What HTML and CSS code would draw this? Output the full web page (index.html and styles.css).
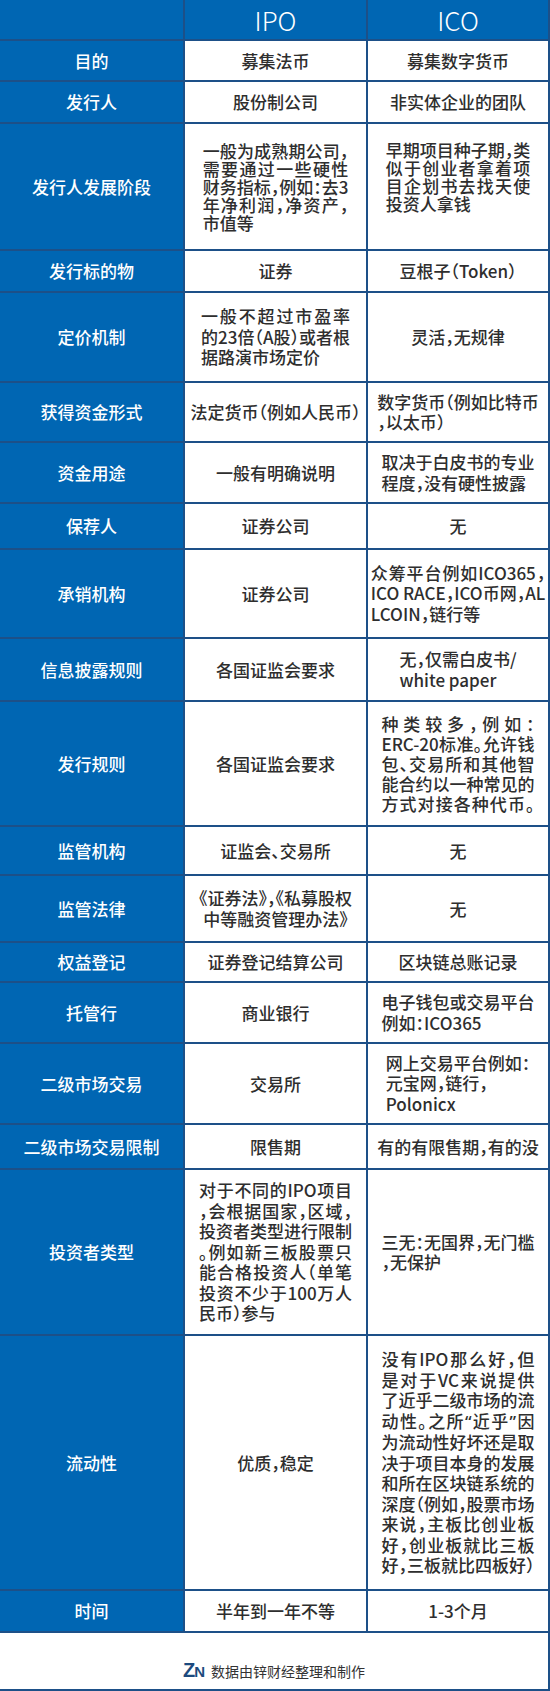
FILE: index.html
```html
<!DOCTYPE html>
<html lang="zh-CN">
<head>
<meta charset="utf-8">
<title>IPO vs ICO</title>
<link rel="stylesheet" href="styles.css">
</head>
<body>
<div class="table">
  <div class="c hd"></div>
  <div class="c hd">IPO</div>
  <div class="c hd">ICO</div>

  <div class="c lab">目的</div>
  <div class="c">募集法币</div>
  <div class="c">募集数字货币</div>

  <div class="c lab">发行人</div>
  <div class="c">股份制公司</div>
  <div class="c">非实体企业的团队</div>

  <div class="c lab">发行人发展阶段</div>
  <div class="c"><div class="tx lh18"><span class="l">一般为成熟期公司，</span><span class="l">需要通过一些硬性</span><span class="l">财务指标，例如：去3</span><span class="l">年净利润，净资产，</span><span class="l e">市值等</span></div></div>
  <div class="c top"><div class="tx lh18"><span class="l">早期项目种子期，类</span><span class="l">似于创业者拿着项</span><span class="l">目企划书去找天使</span><span class="l e">投资人拿钱</span></div></div>

  <div class="c lab">发行标的物</div>
  <div class="c">证券</div>
  <div class="c">豆根子（Token）</div>

  <div class="c lab">定价机制</div>
  <div class="c"><div class="tx"><span class="l">一般不超过市盈率</span><span class="l">的23倍（A股）或者根</span><span class="l e">据路演市场定价</span></div></div>
  <div class="c">灵活，无规律</div>

  <div class="c lab">获得资金形式</div>
  <div class="c">法定货币（例如人民币）</div>
  <div class="c"><div class="tx"><span class="l">数字货币（例如比特币</span><span class="l e">，以太币）</span></div></div>

  <div class="c lab">资金用途</div>
  <div class="c">一般有明确说明</div>
  <div class="c"><div class="tx"><span class="l">取决于白皮书的专业</span><span class="l e">程度，没有硬性披露</span></div></div>

  <div class="c lab">保荐人</div>
  <div class="c">证券公司</div>
  <div class="c">无</div>

  <div class="c lab">承销机构</div>
  <div class="c">证券公司</div>
  <div class="c"><div class="tx"><span class="l">众筹平台例如ICO365，</span><span class="l">ICO RACE，ICO币网，AL</span><span class="l e">LCOIN，链行等</span></div></div>

  <div class="c lab">信息披露规则</div>
  <div class="c">各国证监会要求</div>
  <div class="c"><div class="tx"><span class="l e">无，仅需白皮书/</span><span class="l e">white paper</span></div></div>

  <div class="c lab">发行规则</div>
  <div class="c">各国证监会要求</div>
  <div class="c"><div class="tx lh20"><span class="l">种类较多，例如：</span><span class="l">ERC-20标准。允许钱</span><span class="l">包、交易所和其他智</span><span class="l">能合约以一种常见的</span><span class="l">方式对接各种代币。</span></div></div>

  <div class="c lab">监管机构</div>
  <div class="c">证监会、交易所</div>
  <div class="c">无</div>

  <div class="c lab">监管法律</div>
  <div class="c"><div class="tx ctr"><span class="l">《证券法》，《私募股权</span><span class="l">中等融资管理办法》</span></div></div>
  <div class="c">无</div>

  <div class="c lab">权益登记</div>
  <div class="c">证券登记结算公司</div>
  <div class="c">区块链总账记录</div>

  <div class="c lab">托管行</div>
  <div class="c">商业银行</div>
  <div class="c"><div class="tx"><span class="l">电子钱包或交易平台</span><span class="l e">例如：ICO365</span></div></div>

  <div class="c lab">二级市场交易</div>
  <div class="c">交易所</div>
  <div class="c"><div class="tx"><span class="l">网上交易平台例如：</span><span class="l e">元宝网，链行，</span><span class="l e">Polonicx</span></div></div>

  <div class="c lab">二级市场交易限制</div>
  <div class="c">限售期</div>
  <div class="c">有的有限售期，有的没</div>

  <div class="c lab">投资者类型</div>
  <div class="c"><div class="tx"><span class="l">对于不同的IPO项目</span><span class="l">，会根据国家，区域，</span><span class="l">投资者类型进行限制</span><span class="l">。例如新三板股票只</span><span class="l">能合格投资人（单笔</span><span class="l">投资不少于100万人</span><span class="l e">民币）参与</span></div></div>
  <div class="c"><div class="tx"><span class="l">三无：无国界，无门槛</span><span class="l e">，无保护</span></div></div>

  <div class="c lab">流动性</div>
  <div class="c">优质，稳定</div>
  <div class="c"><div class="tx"><span class="l">没有IPO那么好，但</span><span class="l">是对于VC来说提供</span><span class="l">了近乎二级市场的流</span><span class="l">动性。之所<span class="q">“</span>近乎<span class="q">”</span>因</span><span class="l">为流动性好坏还是取</span><span class="l">决于项目本身的发展</span><span class="l">和所在区块链系统的</span><span class="l">深度（例如，股票市场</span><span class="l">来说，主板比创业板</span><span class="l">好，创业板就比三板</span><span class="l">好，三板就比四板好）</span></div></div>

  <div class="c lab">时间</div>
  <div class="c">半年到一年不等</div>
  <div class="c">1-3个月</div>
</div>
<div class="foot">
  <span class="logo"><span class="lz">Z</span><span class="ln">N</span></span>
  <span class="ft">数据由锌财经整理和制作</span>
</div>
</body>
</html>
```

FILE: styles.css
```css
* {
  box-sizing: border-box;
  margin: 0;
  padding: 0;
}

html,
body {
  background: #ffffff;
}

body {
  margin: 0;
  font-family: "Noto Sans CJK SC", "Noto Sans", sans-serif;
  font-size: 17px;
  color: #2e2e2e;
  font-feature-settings: "halt";
}

.table {
  display: grid;
  grid-template-columns: 183px 181px 1fr;
  grid-template-rows: 39px 39px 40px 125px 40px 88px 58px 59px 44px 87px 61px 123px 47px 65px 38px 59px 79px 43px 164px 253px 40px;
  gap: 2px;
  padding: 0 2px 2px 0;
  background: #1d5088;
}

.c {
  display: flex;
  align-items: center;
  justify-content: center;
  text-align: center;
  background: #ffffff;
  font-weight: 500;
  line-height: 20px;
  white-space: nowrap;
}

.lab {
  background: #0066b3;
  color: #ffffff;
}

.hd {
  background: #0066b3;
  color: #ffffff;
  font-size: 26px;
  font-weight: 300;
  line-height: 30px;
}

.top {
  align-items: flex-start;
  padding-top: 17px;
}

.tx {
  width: max-content;
  text-align: left;
  line-height: 20.5px;
}

.tx.lh18 {
  line-height: 18px;
}

.tx.lh20 {
  line-height: 20px;
}

.tx .l {
  display: block;
  white-space: nowrap;
  text-align: justify;
  text-align-last: justify;
}

.tx .l.e {
  text-align-last: left;
}

.tx.ctr .l {
  text-align: center;
  text-align-last: center;
}

.q {
  font-family: "Noto Sans", sans-serif;
}

.foot {
  height: 58px;
  display: flex;
  align-items: center;
  justify-content: center;
  padding-top: 20px;
  border-right: 2px solid #1d5088;
  border-bottom: 2px solid #1d5088;
}

.logo {
  display: flex;
  align-items: baseline;
  color: #1c4a7e;
  font-family: "Liberation Sans", "DejaVu Sans", sans-serif;
  font-weight: 700;
  margin-right: 6px;
}

.lz {
  font-size: 20px;
  line-height: 20px;
  letter-spacing: -1px;
}

.ln {
  font-size: 15px;
  line-height: 20px;
}

.ft {
  font-size: 14px;
  color: #333333;
  line-height: 20px;
}
```
